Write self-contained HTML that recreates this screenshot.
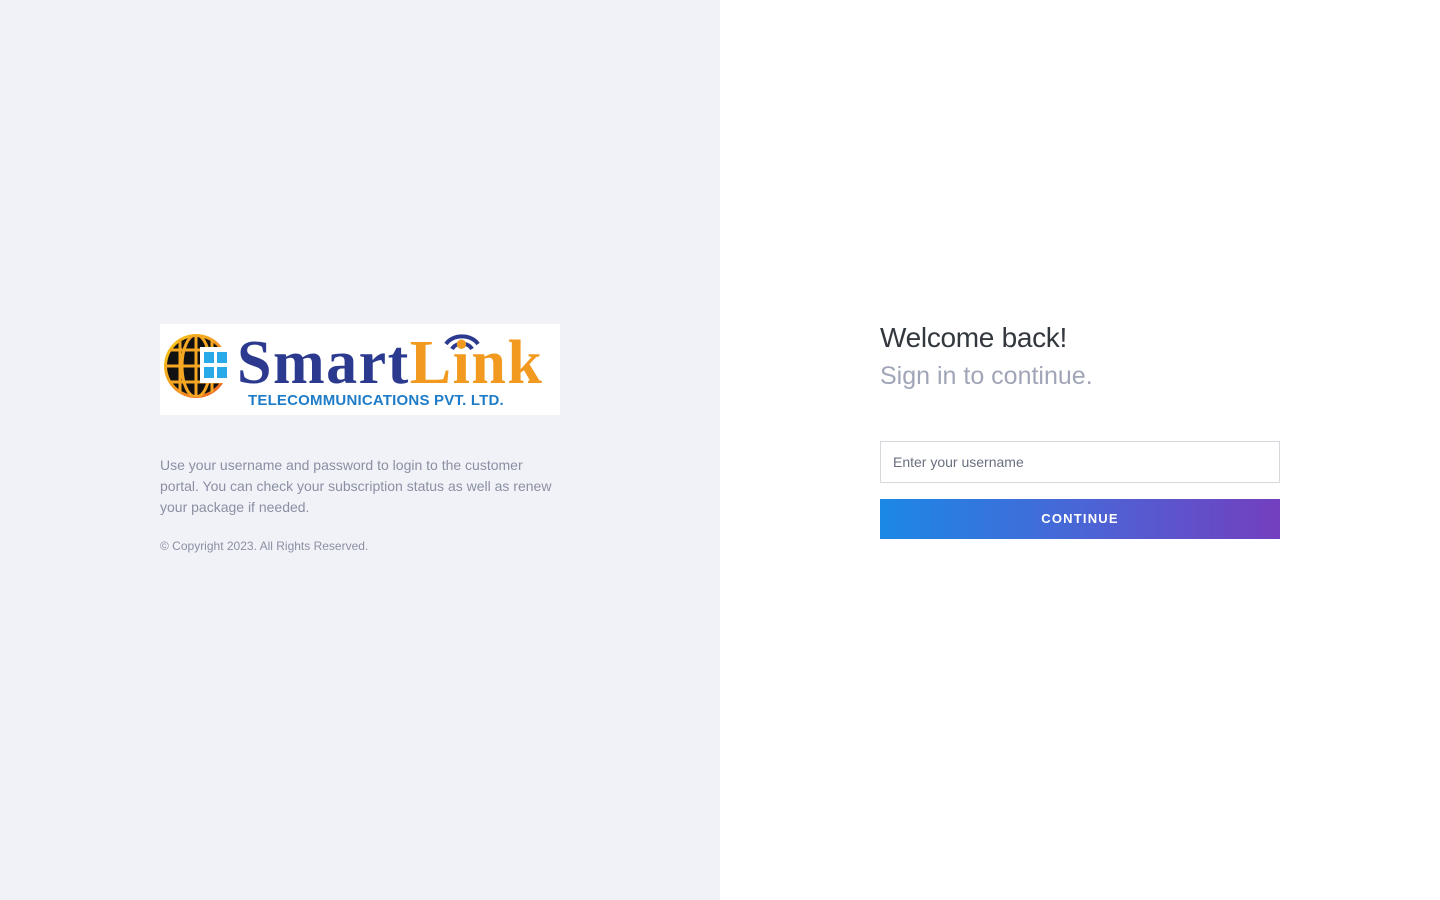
<!DOCTYPE html>
<html><head><meta charset="utf-8"><style>
*{margin:0;padding:0;box-sizing:border-box}
body{width:1440px;height:900px;font-family:"Liberation Sans",sans-serif;position:relative;overflow:hidden;background:#fff}
.left{position:absolute;left:0;top:0;width:720px;height:900px;background:#f1f2f7}
.logo{position:absolute;left:160px;top:324px;width:400px;height:91px;background:#fff}
.desc{position:absolute;left:160px;top:455px;width:400px;font-size:14px;line-height:21px;color:#8a8fa3}
.copy{position:absolute;left:160px;top:539px;font-size:12px;color:#8a8fa3}
h1{position:absolute;left:880px;top:322px;font-size:28px;font-weight:300;color:#33373e;letter-spacing:-0.3px}
h2{position:absolute;left:880px;top:362px;font-size:25px;font-weight:300;color:#a0a6b8}
.inp{position:absolute;left:880px;top:441px;width:400px;height:42px;border:1px solid #d6d8de;font-size:14px;color:#6b7080;padding:12px}
.btn{position:absolute;left:880px;top:499px;width:400px;height:40px;background:linear-gradient(90deg,#1b88e6,#4e62d4 55%,#733fbf);color:#fff;font-size:13px;letter-spacing:1.2px;text-align:center;line-height:40px;font-weight:bold}
</style></head><body>
<div class="left">
<div class="logo">
<svg width="400" height="91" style="position:absolute;left:0;top:0">
<defs><linearGradient id="g" x1="0" y1="0" x2="1" y2="1"><stop offset="0" stop-color="#f7d21b"/><stop offset="1" stop-color="#ee5a24"/></linearGradient>
<clipPath id="c"><circle cx="36" cy="42" r="31"/></clipPath></defs>
<circle cx="36" cy="42" r="32" fill="url(#g)"/>
<circle cx="36" cy="42" r="29" fill="#111"/>
<g stroke="#f5a623" stroke-width="3" fill="none" clip-path="url(#c)">
<ellipse cx="36" cy="42" rx="14" ry="31"/><line x1="36" y1="10" x2="36" y2="74"/>
<line x1="4" y1="26" x2="68" y2="26"/><line x1="4" y1="42" x2="68" y2="42"/><line x1="4" y1="58" x2="68" y2="58"/>
<line x1="20" y1="10" x2="20" y2="74"/><line x1="52" y1="10" x2="52" y2="74"/></g>
<rect x="40" y="23" width="30" height="36" fill="#fff"/>
<rect x="44" y="28" width="10" height="11" fill="#2aa9e8"/><rect x="57" y="28" width="10" height="11" fill="#2aa9e8"/>
<rect x="44" y="43" width="10" height="11" fill="#2aa9e8"/><rect x="57" y="43" width="10" height="11" fill="#2aa9e8"/>
<g stroke="#2b3a8f" stroke-width="4" fill="none"><path d="M286 20 A18 14 0 0 1 318 20"/><path d="M292 25 A11 9 0 0 1 312 25"/></g>
</svg>
<div style="position:absolute;left:77px;top:8px;font-family:'Liberation Serif',serif;font-weight:bold;font-size:62px;line-height:62px;letter-spacing:1.5px;color:#2b3a8f">Smart<span style="color:#f29a1f">Link</span></div>
<div style="position:absolute;left:88px;top:68px;font-weight:bold;font-size:15px;color:#1f7cc8;letter-spacing:0.2px">TELECOMMUNICATIONS PVT. LTD.</div>
</div>
<div class="desc">Use your username and password to login to the customer portal. You can check your subscription status as well as renew your package if needed.</div>
<div class="copy">© Copyright 2023. All Rights Reserved.</div>
</div>
<h1>Welcome back!</h1>
<h2>Sign in to continue.</h2>
<div class="inp">Enter your username</div>
<div class="btn">CONTINUE</div>
</body></html>
